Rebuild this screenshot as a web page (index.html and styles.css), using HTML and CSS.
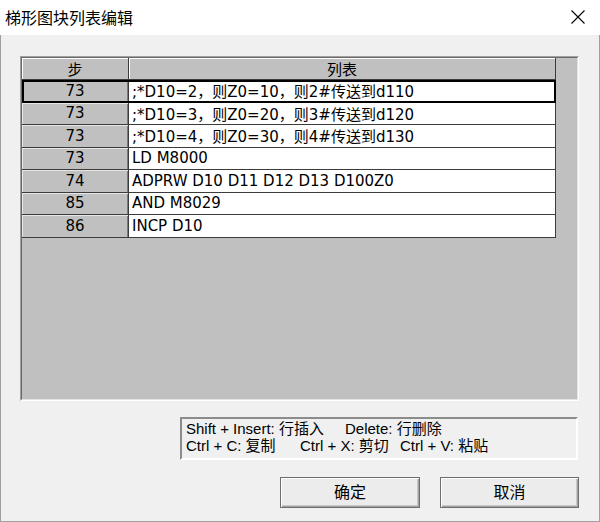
FILE: index.html
```html
<!DOCTYPE html>
<html lang="zh-CN">
<head>
<meta charset="utf-8">
<title>梯形图块列表编辑</title>
<link rel="stylesheet" href="styles.css">
</head>
<body>
<div class="window">
  <div class="titlebar">
    <span class="title">梯形图块列表编辑</span>
    <svg class="close" width="16" height="16" viewBox="0 0 16 16"><path d="M1.5 1.5 L14.5 14.5 M14.5 1.5 L1.5 14.5" stroke="#000" stroke-width="1.1" fill="none"/></svg>
  </div>
  <div class="content">
    <div class="frame">
      <div class="frame-inner">
        <div class="grid">
          <div class="row head">
            <div class="c1 hcell">步</div>
            <div class="c2 hcell">列表</div>
          </div>
          <div class="row selected">
            <div class="c1 rcell">73</div>
            <div class="c2 dcell">;*D10=2，则Z0=10，则2#传送到d110</div>
          </div>
          <div class="row">
            <div class="c1 rcell">73</div>
            <div class="c2 dcell">;*D10=3，则Z0=20，则3#传送到d120</div>
          </div>
          <div class="row">
            <div class="c1 rcell">73</div>
            <div class="c2 dcell">;*D10=4，则Z0=30，则4#传送到d130</div>
          </div>
          <div class="row">
            <div class="c1 rcell">73</div>
            <div class="c2 dcell">LD M8000</div>
          </div>
          <div class="row">
            <div class="c1 rcell">74</div>
            <div class="c2 dcell">ADPRW D10 D11 D12 D13 D100Z0</div>
          </div>
          <div class="row">
            <div class="c1 rcell">85</div>
            <div class="c2 dcell">AND M8029</div>
          </div>
          <div class="row">
            <div class="c1 rcell">86</div>
            <div class="c2 dcell">INCP D10</div>
          </div>
        </div>
      </div>
    </div>
    <div class="info">
      <div class="line"><span class="seg s1">Shift + Insert: 行插入</span><span class="seg">Delete: 行删除</span></div>
      <div class="line"><span class="seg s2">Ctrl + C: 复制</span><span class="seg s3">Ctrl + X: 剪切</span><span class="seg">Ctrl + V: 粘贴</span></div>
    </div>
    <div class="buttons">
      <button class="btn default">确定</button>
      <button class="btn">取消</button>
    </div>
  </div>
</div>
</body>
</html>
```
FILE: styles.css
```css
* { box-sizing: border-box; }
html, body { margin: 0; padding: 0; }
body {
  width: 600px;
  height: 522px;
  overflow: hidden;
  background: #f0f0f0;
  font-family: "DejaVu Sans", "Noto Sans CJK SC", sans-serif;
  color: #000;
}
.window {
  width: 600px;
  height: 522px;
  display: flex;
  flex-direction: column;
}
.titlebar {
  height: 35px;
  background: #fff;
  display: flex;
  align-items: center;
  justify-content: space-between;
  padding: 0 14px 0 5px;
}
.title {
  font-family: "Noto Sans CJK SC", sans-serif;
  font-size: 16px;
  line-height: 20px;
  margin-top: -1px;
}
.close { display: block; margin-top: -1px; }
.content {
  flex: 1;
  border: 1px solid #a0a0a0;
  border-top: none;
  display: flex;
  flex-direction: column;
  padding: 21px 20px 0 19px;
}
.frame {
  height: 345px;
  border: 1px solid;
  border-color: #a0a0a0 #ffffff #ffffff #a0a0a0;
}
.frame-inner {
  height: 100%;
  border: 1px solid;
  border-color: #696969 #e3e3e3 #e3e3e3 #696969;
  background: #c0c0c0;
}
.grid {
  width: 534px;
}
.row {
  display: flex;
  height: 22.5px;
  border-bottom: 1px solid #3c3c3c;
  font-size: 15px;
}
.row.head {
  height: 22px;
}
.row.selected {
  outline: 2px solid #000;
  outline-offset: -2px;
  position: relative;
}
.c1 {
  width: 107px;
  border-right: 1px solid #3c3c3c;
  display: flex;
  align-items: center;
  justify-content: center;
}
.c2 {
  width: 427px;
  border-right: 1px solid #3c3c3c;
  display: flex;
  align-items: center;
}
.hcell {
  background: #c0c0c0;
  box-shadow: inset 1px 1px 0 #ffffff;
  justify-content: center;
  font-family: "Noto Sans CJK SC", sans-serif;
  font-size: 15px;
}
.rcell {
  background: #c0c0c0;
  box-shadow: inset 1px 1px 0 #e6e6e6, inset -1px 0 0 #7a7a7a;
}
.dcell {
  background: #fff;
  padding-left: 3px;
  white-space: nowrap;
}
.info {
  align-self: flex-end;
  margin-top: 16px;
  margin-right: 1px;
  width: 398px;
  height: 43px;
  border: 2px solid;
  border-color: #8c8c8c #ffffff #ffffff #8c8c8c;
  padding: 1px 0 0 4px;
  font-family: "Liberation Sans", "Noto Sans CJK SC", sans-serif;
  font-size: 15px;
  line-height: 17px;
}
.line { white-space: nowrap; }
.seg { display: inline-block; }
.s1 { width: 159px; }
.s2 { width: 114px; }
.s3 { width: 100px; }
.buttons {
  align-self: flex-end;
  margin-top: 17px;
  display: flex;
  gap: 20px;
}
.btn {
  width: 140px;
  height: 31px;
  margin: 0;
  padding: 0 0 3px 0;
  border: 1px solid #6e6e6e;
  background: #ececec;
  box-shadow: inset 1px 1px 0 #ffffff, inset -1px -1px 0 #a0a0a0, inset -2px -2px 0 #c8c8c8;
  font-family: "Noto Sans CJK SC", sans-serif;
  font-size: 16px;
  line-height: 20px;
  color: #000;
}
.btn + .btn { width: 139px; }
```
